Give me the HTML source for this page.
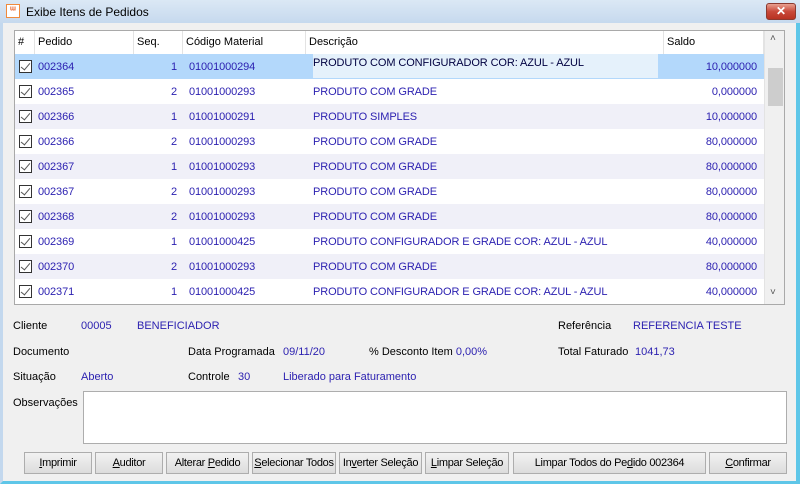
<!DOCTYPE html>
<html><head><meta charset="utf-8"><style>
*{margin:0;padding:0;box-sizing:border-box}
body{width:800px;height:484px;overflow:hidden;font-family:"Liberation Sans",sans-serif;font-size:11px;color:#000;background:#f0f0f0;position:relative}
.a{position:absolute;white-space:nowrap}
.b{color:#2a1fb0}
.title{left:0;top:0;width:800px;height:23px;background:linear-gradient(#dbe8f5,#c6d9ee);}
.frame{left:0;top:23px;width:800px;height:461px;border-left:3px solid #c3d8ee;border-right:4px solid #5ec6e8;border-bottom:3px solid #5ec6e8;background:#f0f0f0}
.grid{left:14px;top:30px;width:771px;height:275px;border:1px solid #a9a9a9;background:#fff;overflow:hidden}
.row{position:absolute;left:0;width:749px;height:25px}
.hd{position:absolute;top:0;height:23px;border-right:1px solid #e3e3e3;padding:5px 0 0 3px}
.cb{position:absolute;left:4px;top:6px;width:13px;height:13px;border:1px solid #333;background:#fff}
.cb:after{content:"";position:absolute;left:3px;top:0px;width:4px;height:8px;border-right:1.5px solid #555;border-bottom:1.5px solid #555;transform:rotate(40deg)}
.c{position:absolute;top:7px;letter-spacing:-0.1px}
.btn{position:absolute;top:452px;height:22px;background:linear-gradient(#f2f2f2,#dcdcdc);border:1px solid #adadad;text-align:center;padding-top:4px;white-space:nowrap;letter-spacing:-0.3px;overflow:hidden}
u{text-decoration:underline}
</style></head><body>
<div class="a title"></div>
<div class="a" style="left:6px;top:4px;width:14px;height:14px;background:#fff;border:1px solid #f08a3c;color:#e8602a;font-size:10px;font-weight:bold;line-height:12px;text-align:center">ᵚ</div>
<div class="a" style="left:26px;top:5px;font-size:12px">Exibe Itens de Pedidos</div>
<div class="a" style="left:766px;top:3px;width:30px;height:17px;border-radius:3px;background:linear-gradient(#e8a090,#c9493a 50%,#b83222);border:1px solid #8b3a30;color:#fff;font-weight:bold;font-size:12px;text-align:center;line-height:15px">✕</div>
<div class="a frame"></div>
<div class="a grid">
 <div class="hd" style="left:0;width:20px">#</div>
 <div class="hd" style="left:20px;width:99px">Pedido</div>
 <div class="hd" style="left:119px;width:49px">Seq.</div>
 <div class="hd" style="left:168px;width:123px">Código Material</div>
 <div class="hd" style="left:291px;width:358px">Descrição</div>
 <div class="hd" style="left:649px;width:100px">Saldo</div>
 <div style="position:absolute;left:749px;top:0;width:21px;height:273px;background:#f0f0f0;border-left:1px solid #e3e3e3"></div>
 <div class="a" style="left:755px;top:2px;font-size:10px;color:#555">˄</div>
 <div style="position:absolute;left:753px;top:37px;width:15px;height:38px;background:#cdcdcd"></div>
 <div class="a" style="left:755px;top:256px;font-size:10px;color:#555">˅</div>
 <div id="rows"></div>
</div>
<script>
var d=[["002364","1","01001000294","PRODUTO COM CONFIGURADOR COR: AZUL - AZUL","10,000000"],
["002365","2","01001000293","PRODUTO COM GRADE","0,000000"],
["002366","1","01001000291","PRODUTO SIMPLES","10,000000"],
["002366","2","01001000293","PRODUTO COM GRADE","80,000000"],
["002367","1","01001000293","PRODUTO COM GRADE","80,000000"],
["002367","2","01001000293","PRODUTO COM GRADE","80,000000"],
["002368","2","01001000293","PRODUTO COM GRADE","80,000000"],
["002369","1","01001000425","PRODUTO CONFIGURADOR E GRADE COR: AZUL - AZUL","40,000000"],
["002370","2","01001000293","PRODUTO COM GRADE","80,000000"],
["002371","1","01001000425","PRODUTO CONFIGURADOR E GRADE COR: AZUL - AZUL","40,000000"]];
var h="";
d.forEach(function(r,i){
var bg=i==0?"#b3d8fb":(i%2?"#ffffff":"#f0f0f8");
h+='<div class="row" style="top:'+(23+i*25)+'px;background:'+bg+'">';
h+='<div class="cb"></div>';
h+='<div class="c b" style="left:23px">'+r[0]+'</div>';
h+='<div class="c b" style="left:119px;width:43px;text-align:right">'+r[1]+'</div>';
h+='<div class="c b" style="left:174px">'+r[2]+'</div>';
if(i==0){h+='<div style="position:absolute;left:298px;top:0;width:345px;height:24px;background:#e5f1fb"></div><div class="c" style="left:298px;top:3px;color:#000040">'+r[3]+'</div>';}
else h+='<div class="c b" style="left:298px">'+r[3]+'</div>';
h+='<div class="c b" style="left:649px;width:93px;text-align:right">'+r[4]+'</div>';
h+='</div>';});
document.getElementById("rows").innerHTML=h;
</script>
<div class="a" style="left:13px;top:320px">Cliente</div>
<div class="a b" style="left:81px;top:320px">00005</div>
<div class="a b" style="left:137px;top:320px">BENEFICIADOR</div>
<div class="a" style="left:558px;top:320px">Referência</div>
<div class="a b" style="left:633px;top:320px">REFERENCIA TESTE</div>
<div class="a" style="left:13px;top:346px">Documento</div>
<div class="a" style="left:188px;top:346px">Data Programada</div>
<div class="a b" style="left:283px;top:346px">09/11/20</div>
<div class="a" style="left:369px;top:346px">% Desconto Item <span class="b">0,00%</span></div>
<div class="a" style="left:558px;top:346px">Total Faturado</div>
<div class="a b" style="left:635px;top:346px">1041,73</div>
<div class="a" style="left:13px;top:371px">Situação</div>
<div class="a b" style="left:81px;top:371px">Aberto</div>
<div class="a" style="left:188px;top:371px">Controle</div>
<div class="a b" style="left:238px;top:371px">30</div>
<div class="a b" style="left:283px;top:371px">Liberado para Faturamento</div>
<div class="a" style="left:13px;top:397px">Observações</div>
<div class="a" style="left:83px;top:391px;width:704px;height:53px;background:#fff;border:1px solid #adadad"></div>
<div class="btn" style="left:24px;width:68px"><u>I</u>mprimir</div>
<div class="btn" style="left:95px;width:68px"><u>A</u>uditor</div>
<div class="btn" style="left:166px;width:83px">Alterar <u>P</u>edido</div>
<div class="btn" style="left:252px;width:84px"><u>S</u>elecionar Todos</div>
<div class="btn" style="left:339px;width:83px">In<u>v</u>erter Seleção</div>
<div class="btn" style="left:425px;width:84px"><u>L</u>impar Seleção</div>
<div class="btn" style="left:513px;width:193px">Limpar Todos do Pe<u>d</u>ido 002364</div>
<div class="btn" style="left:709px;width:78px"><u>C</u>onfirmar</div>
</body></html>
